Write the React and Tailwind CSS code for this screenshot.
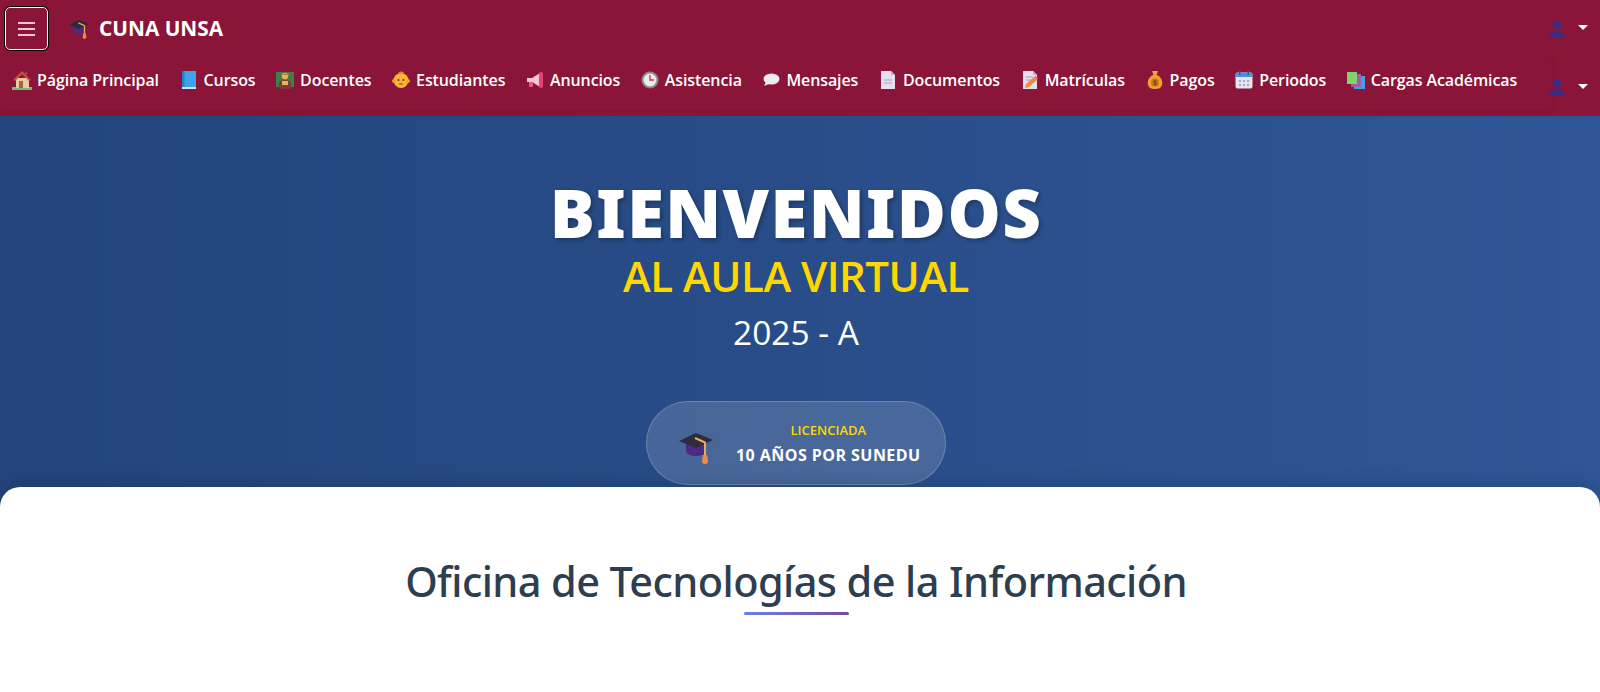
import React from "react";

const Cap = ({ size = 24 }) => (
  <svg width={size} height={size} viewBox="0 0 36 36">
    <path d="M8 13v8c0 3 5 5 10 5s10-2 10-5v-8z" fill="#4b2a86" />
    <path d="M1 11 18 3l17 7-17 8z" fill="#2f2b3d" />
    <path d="M17 8l10 4.5V25" fill="none" stroke="#f2a65a" strokeWidth="2" />
    <path d="M25 25h4l1 6a3 3 0 0 1-6 0z" fill="#ef8a4c" />
  </svg>
);

const House = () => (
  <svg width="20" height="20" viewBox="0 0 20 20">
    <rect x="0" y="17" width="20" height="3" fill="#6fbf73" />
    <rect x="4" y="8" width="13" height="10" fill="#e8c9a8" />
    <path d="M1 10 10 1l9 9-2 1-7-7-7 7z" fill="#c9543f" />
    <rect x="7" y="11" width="4" height="7" fill="#a8643c" />
    <rect x="13" y="2" width="2" height="4" fill="#9c4a3a" />
  </svg>
);

const Book = () => (
  <svg width="20" height="20" viewBox="0 0 20 20">
    <rect x="3" y="1" width="14" height="18" rx="1" fill="#3fa3e8" />
    <rect x="3" y="1" width="2.5" height="18" fill="#2b7fc4" />
    <rect x="3" y="17" width="14" height="2" fill="#cfe6f7" />
  </svg>
);

const Teacher = () => (
  <svg width="20" height="20" viewBox="0 0 20 20">
    <rect x="1" y="2" width="18" height="15" fill="#3f7d4e" />
    <circle cx="10" cy="6" r="3.2" fill="#f2b04e" />
    <path d="M6 3.5h8V5H6z" fill="#c77b2a" />
    <path d="M4 19v-6c0-2 3-3 6-3s6 1 6 3v6z" fill="#7a3b3b" />
    <rect x="7" y="11" width="6" height="4" fill="#f2b04e" />
  </svg>
);

const Baby = () => (
  <svg width="20" height="20" viewBox="0 0 20 20">
    <circle cx="10" cy="10.5" r="7.5" fill="#f7b733" />
    <circle cx="3" cy="11" r="2" fill="#f2a12b" />
    <circle cx="17" cy="11" r="2" fill="#f2a12b" />
    <path d="M7 3c2-2 5-2 6 0-2 1-4 1-6 0z" fill="#e8832a" />
    <circle cx="7.5" cy="10" r="1" fill="#5a3a1e" />
    <circle cx="12.5" cy="10" r="1" fill="#5a3a1e" />
    <ellipse cx="10" cy="14" rx="2" ry="1.3" fill="#d9694a" />
  </svg>
);

const Megaphone = () => (
  <svg width="20" height="20" viewBox="0 0 20 20">
    <path d="M2 8h5l8-5v14l-8-5H2z" fill="#f4c6d0" />
    <rect x="14" y="2" width="4" height="16" rx="2" fill="#ec407a" />
    <rect x="4" y="12" width="4" height="5" fill="#e8557f" />
  </svg>
);

const Clock = () => (
  <svg width="20" height="20" viewBox="0 0 20 20">
    <circle cx="10" cy="10" r="8.5" fill="#8a8a8a" />
    <circle cx="10" cy="10" r="6.5" fill="#ececec" />
    <path d="M10 5v5h4" fill="none" stroke="#c0392b" strokeWidth="1.3" />
  </svg>
);

const Speech = () => (
  <svg width="20" height="20" viewBox="0 0 20 20">
    <ellipse cx="10.5" cy="9" rx="8" ry="5.5" fill="#eeeaf2" />
    <path d="M5 12 3 16l6-2.5z" fill="#eeeaf2" />
  </svg>
);

const Doc = () => (
  <svg width="20" height="20" viewBox="0 0 20 20">
    <path d="M3 1h10l4 4v14H3z" fill="#e6dff0" />
    <path d="M13 1l4 4h-4z" fill="#bdb2cc" />
    <path d="M6 10h8M6 13h8" stroke="#a9a0b8" strokeWidth="1" />
  </svg>
);

const DocPencil = () => (
  <svg width="20" height="20" viewBox="0 0 20 20">
    <path d="M3 1h10l4 4v14H3z" fill="#e6dff0" />
    <path d="M13 1l4 4h-4z" fill="#bdb2cc" />
    <path d="M6 7h7M6 10h5" stroke="#a9a0b8" strokeWidth="1" />
    <path d="M5 18l1-4 8-7 3 3-8 7z" fill="#f08a3c" />
    <path d="M14 7l2-1 2 2-1 2z" fill="#ec5f7a" />
  </svg>
);

const MoneyBag = () => (
  <svg width="20" height="20" viewBox="0 0 20 20">
    <path d="M7 1h6l-1.5 4h-3z" fill="#f2a43a" />
    <path d="M8 5h4c4 2 6 6 5 10-1 3-3 4-7 4s-6-1-7-4C2 11 4 7 8 5z" fill="#f0a030" />
    <circle cx="10" cy="12.5" r="4" fill="#c9781f" />
    <text x="10" y="15" textAnchor="middle" fontSize="7" fontWeight="700" fill="#7a4510" fontFamily="'Open Sans', sans-serif">$</text>
  </svg>
);

const Calendar = () => (
  <svg width="20" height="20" viewBox="0 0 20 20">
    <rect x="1.5" y="2.5" width="17" height="16" rx="2" fill="#e6e4f2" />
    <path d="M1.5 7V4.5a2 2 0 0 1 2-2h13a2 2 0 0 1 2 2V7z" fill="#4a8fd9" />
    <rect x="5" y="1" width="1.5" height="4" fill="#2f5f9e" />
    <rect x="13.5" y="1" width="1.5" height="4" fill="#2f5f9e" />
    <path d="M5 10h2v2H5zM9 10h2v2H9zM13 10h2v2h-2zM5 14h2v2H5zM9 14h2v2H9zM13 14h2v2h-2z" fill="#a3a9c9" />
  </svg>
);

const Books = () => (
  <svg width="20" height="20" viewBox="0 0 20 20">
    <rect x="8" y="6" width="11" height="13" fill="#3fa3e8" />
    <rect x="5" y="4" width="10" height="13" fill="#a35ca8" />
    <rect x="1" y="2" width="10" height="12" fill="#7ed36a" />
  </svg>
);

const UserIcon = () => (
  <svg width="16" height="20" viewBox="0 0 16 20">
    <circle cx="8" cy="6" r="4.5" fill="#3f2a80" />
    <path d="M0 19c0-4 3-6 5-6.5h6c2 .5 5 2.5 5 6.5z" fill="#3f2a80" />
  </svg>
);

const navItems = [
  { icon: House, label: "Página Principal" },
  { icon: Book, label: "Cursos" },
  { icon: Teacher, label: "Docentes" },
  { icon: Baby, label: "Estudiantes" },
  { icon: Megaphone, label: "Anuncios" },
  { icon: Clock, label: "Asistencia" },
  { icon: Speech, label: "Mensajes" },
  { icon: Doc, label: "Documentos" },
  { icon: DocPencil, label: "Matrículas" },
  { icon: MoneyBag, label: "Pagos" },
  { icon: Calendar, label: "Periodos" },
  { icon: Books, label: "Cargas Académicas" },
];

const UserMenu = () => (
  <div className="flex items-center gap-[13px]">
    <UserIcon />
    <span className="mb-[2px] h-0 w-0 border-x-[5px] border-t-[5px] border-x-transparent border-t-white"></span>
  </div>
);

export default function App() {
  return (
    <div className="h-[692px] overflow-hidden bg-white font-['Open_Sans',sans-serif]">
      {/* Navbar */}
      <header className="h-[116px] bg-[#8a1538] flex flex-col">
        <div className="h-[57px] flex items-center pl-[5px] pr-[12px]">
          <button className="w-[43px] h-[43px] rounded-[5px] border border-white outline outline-1 outline-black flex flex-col items-center justify-center gap-[4px]">
            <span className="block w-[17px] h-[2px] bg-[#f4c5d1]"></span>
            <span className="block w-[17px] h-[2px] bg-[#f4c5d1]"></span>
            <span className="block w-[17px] h-[2px] bg-[#f4c5d1]"></span>
          </button>
          <div className="ml-[20px] flex items-center gap-[9px]">
            <Cap size={22} />
            <span className="text-[20.8px] font-bold text-white">CUNA UNSA</span>
          </div>
          <div className="ml-auto">
            <UserMenu />
          </div>
        </div>
        <div className="flex pr-[12px] justify-between items-start">
          <nav className="w-[1551px] h-[53px] rounded-b-[5px] shadow-[0_2px_6px_rgba(0,0,0,0.08)] flex items-center gap-[19.6px] pl-[12px] pb-[8px]">
            {navItems.map(({ icon: Icon, label }) => (
              <a key={label} className="flex items-center gap-[5px] text-[16px] font-semibold text-white tracking-[-0.1px] whitespace-nowrap">
                <Icon />
                {label}
              </a>
            ))}
          </nav>
          <div className="mt-[20px] -ml-[8px]">
            <UserMenu />
          </div>
        </div>
      </header>

      {/* Hero */}
      <section className="h-[391px] bg-gradient-to-r from-[#23447c] to-[#2e5696] flex flex-col items-center pt-[60px] pr-[8px]">
        <h1 className="font-['Noto_Sans',sans-serif] text-[67px] leading-[72px] font-black text-white tracking-[1.4px] [text-shadow:2px_2px_4px_rgba(0,0,0,0.3)]">BIENVENIDOS</h1>
        <h2 className="mt-[2px] text-[42px] leading-[52px] font-semibold text-[#ffd700] tracking-[-0.5px]">AL AULA VIRTUAL</h2>
        <p className="mt-[6px] text-[33.5px] leading-[48px] text-white">2025 - A</p>
        <div className="mt-[45px] w-[300px] h-[84px] rounded-full bg-white/15 border border-white/20 flex items-center pl-[31px] gap-[22px]">
          <div className="mt-[10px]">
            <Cap size={36} />
          </div>
          <div className="flex flex-col items-center gap-[3px] mt-[2px]">
            <span className="text-[13px] font-semibold text-[#ffd700]">LICENCIADA</span>
            <span className="text-[16px] font-bold text-white tracking-[0.45px]">10 AÑOS POR SUNEDU</span>
          </div>
        </div>
      </section>

      {/* Oficina */}
      <section className="-mt-[20px] relative h-[205px] bg-white rounded-t-[20px] shadow-[0_-6px_14px_rgba(0,0,0,0.1)] flex flex-col items-center pt-[68px] pr-[8px]">
        <h2 className="font-['Noto_Sans',sans-serif] text-[41.5px] leading-[52px] font-medium text-[#2c3e50] tracking-[-0.6px]">Oficina de Tecnologías de la Información</h2>
        <div className="mt-[5px] w-[105px] h-[3px] rounded-sm bg-gradient-to-r from-[#667eea] to-[#764ba2]"></div>
      </section>
    </div>
  );
}
